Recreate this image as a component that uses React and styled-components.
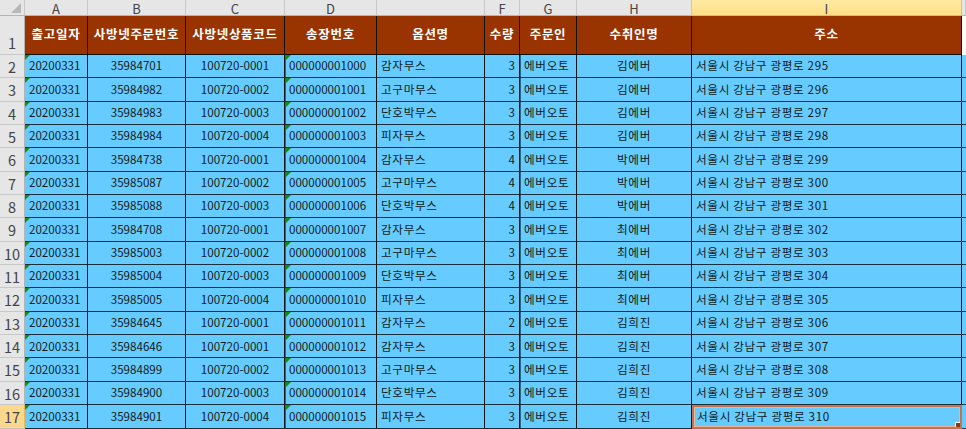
import styled, { createGlobalStyle } from 'styled-components';

const GlobalStyle = createGlobalStyle`
	html, body {
		margin: 0;
		padding: 0;
		background: #ffffff;
		overflow: hidden;
	}
	body {
		font-family: 'Noto Sans CJK KR', 'Noto Sans', sans-serif;
	}
`;

const COLS = [
	{ key: 'A', width: 63, align: 'left', mark: true },
	{ key: 'B', width: 98, align: 'center' },
	{ key: 'C', width: 99, align: 'center' },
	{ key: 'D', width: 92, align: 'left', mark: true, soft: true },
	{ key: '', width: 108, align: 'left', ko: true },
	{ key: 'F', width: 35, align: 'right' },
	{ key: 'G', width: 57, align: 'left', soft: true, ko: true },
	{ key: 'H', width: 115, align: 'center', ko: true },
	{ key: 'I', width: 270, align: 'left', selected: true, ko: true },
];

const HEADINGS = ['출고일자', '사방넷주문번호', '사방넷상품코드', '송장번호', '옵션명', '수량', '주문인', '수취인명', '주소'];

const ROWS = [
	['35984701', '100720-0001', '000000001000', '감자무스', 3, '김에버', 295],
	['35984982', '100720-0002', '000000001001', '고구마무스', 3, '김에버', 296],
	['35984983', '100720-0003', '000000001002', '단호박무스', 3, '김에버', 297],
	['35984984', '100720-0004', '000000001003', '피자무스', 3, '김에버', 298],
	['35984738', '100720-0001', '000000001004', '감자무스', 4, '박에버', 299],
	['35985087', '100720-0002', '000000001005', '고구마무스', 4, '박에버', 300],
	['35985088', '100720-0003', '000000001006', '단호박무스', 4, '박에버', 301],
	['35984708', '100720-0001', '000000001007', '감자무스', 3, '최에버', 302],
	['35985003', '100720-0002', '000000001008', '고구마무스', 3, '최에버', 303],
	['35985004', '100720-0003', '000000001009', '단호박무스', 3, '최에버', 304],
	['35985005', '100720-0004', '000000001010', '피자무스', 3, '최에버', 305],
	['35984645', '100720-0001', '000000001011', '감자무스', 2, '김희진', 306],
	['35984646', '100720-0001', '000000001012', '감자무스', 3, '김희진', 307],
	['35984899', '100720-0002', '000000001013', '고구마무스', 3, '김희진', 308],
	['35984900', '100720-0003', '000000001014', '단호박무스', 3, '김희진', 309],
	['35984901', '100720-0004', '000000001015', '피자무스', 3, '김희진', 310],
];

const Sheet = styled.div`
	display: grid;
	grid-template-columns: 25px ${COLS.map((c) => c.width + 'px').join(' ')} 1fr;
	grid-template-rows: 16px 39px repeat(16, 23.35px);
	width: 966px;
	height: 429px;
	overflow: hidden;
	background: #ffffff;
`;

const Corner = styled.div`
	position: relative;
	background: #e6e6e6;
	border-right: 1px solid #c8c8c8;
	border-bottom: 1px solid #b4b4b4;
	box-sizing: border-box;
	&::after {
		content: '';
		position: absolute;
		right: 3px;
		bottom: 2px;
		width: 0;
		height: 0;
		border-left: 10px solid transparent;
		border-bottom: 10px solid #b8b8b8;
	}
`;

const ColHead = styled.div`
	display: flex;
	align-items: center;
	justify-content: center;
	box-sizing: border-box;
	background: ${(p) => (p.$selected ? 'linear-gradient(#ffeaa3, #fddf87)' : '#e6e6e6')};
	border-right: 1px solid ${(p) => (p.$selected ? '#e2c068' : '#c8c8c8')};
	border-bottom: 1px solid ${(p) => (p.$selected ? '#f2b64a' : '#b4b4b4')};
	color: #444444;
	font-size: 13px;
	line-height: 1;
	padding-top: 1px;
`;

const RowHead = styled.div`
	display: flex;
	align-items: flex-end;
	justify-content: center;
	box-sizing: border-box;
	padding-bottom: ${(p) => (p.$tall ? '4px' : '3px')};
	background: ${(p) => (p.$selected ? '#fcd88f' : '#e6e6e6')};
	border-right: 1px solid ${(p) => (p.$selected ? '#f2b64a' : '#b4b4b4')};
	border-bottom: 1px solid #c8c8c8;
	color: #444444;
	font-size: 14.5px;
	line-height: 1;
`;

const HeadCell = styled.div`
	display: flex;
	align-items: center;
	justify-content: center;
	box-sizing: border-box;
	padding-bottom: 3px;
	background: #993300;
	border-right: 1px solid #111111;
	border-bottom: 1px solid #111111;
	color: #ffffff;
	font-size: 12.5px;
	font-weight: 700;
	letter-spacing: 0.7px;
	white-space: nowrap;
	overflow: hidden;
`;

const Spare = styled.div`
	background: ${(p) => (p.$fill ? '#66ccff' : '#ffffff')};
	border-bottom: ${(p) => (p.$fill ? '1px solid #1c3e52' : 'none')};
	box-sizing: border-box;
`;

const Cell = styled.div`
	position: relative;
	display: flex;
	align-items: center;
	justify-content: ${(p) => (p.$align === 'center' ? 'center' : p.$align === 'right' ? 'flex-end' : 'flex-start')};
	box-sizing: border-box;
	padding: 0 4px 0 4px;
	background: #66ccff;
	border-right: 1px solid #151515;
	border-bottom: 1px solid #1a2f3c;
	color: #121a20;
	font-size: 11.6px;
	letter-spacing: ${(p) => (p.$ko ? '0.65px' : '0')};
	line-height: 1;
	white-space: nowrap;
	overflow: hidden;
	${(p) => p.$soft && 'box-shadow: inset 1px 0 0 #2f6582;'}
	${(p) =>
		p.$active &&
		`
		border: 2px solid #c5734c;
		box-shadow: inset 0 0 0 1px #e8b39a;
		padding-left: 3px;
	`}
`;

const Mark = styled.span`
	position: absolute;
	top: 0;
	left: ${(p) => (p.$soft ? '1px' : '0')};
	width: 0;
	height: 0;
	border-top: 5px solid #168a16;
	border-right: 5px solid transparent;
`;

const Handle = styled.span`
	position: absolute;
	right: -2px;
	bottom: -2px;
	width: 5px;
	height: 5px;
	background: #8a3a12;
	border: 1px solid #ffffff;
`;

export default function App() {
	const last = ROWS.length - 1;
	return (
		<>
			<GlobalStyle />
			<Sheet>
				<Corner />
				{COLS.map((c, i) => (
					<ColHead key={'h' + i} $selected={c.selected}>
						{c.key}
					</ColHead>
				))}
				<ColHead />

				<RowHead $tall>1</RowHead>
				{HEADINGS.map((h) => (
					<HeadCell key={h}>{h}</HeadCell>
				))}
				<Spare />

				{ROWS.map((r, ri) => {
					const values = ['20200331', r[0], r[1], r[2], r[3], r[4], '에버오토', r[5], '서울시 강남구 광평로 ' + r[6]];
					return [
						<RowHead key={'r' + ri} $selected={ri === last}>
							{ri + 2}
						</RowHead>,
						...values.map((v, ci) => {
							const col = COLS[ci];
							const active = ri === last && col.selected;
							return (
								<Cell key={ri + '-' + ci} $align={col.align} $soft={col.soft} $ko={col.ko} $active={active}>
									{col.mark && <Mark $soft={col.soft} />}
									{v}
									{active && <Handle />}
								</Cell>
							);
						}),
						<Spare key={'s' + ri} $fill />,
					];
				})}
			</Sheet>
		</>
	);
}
